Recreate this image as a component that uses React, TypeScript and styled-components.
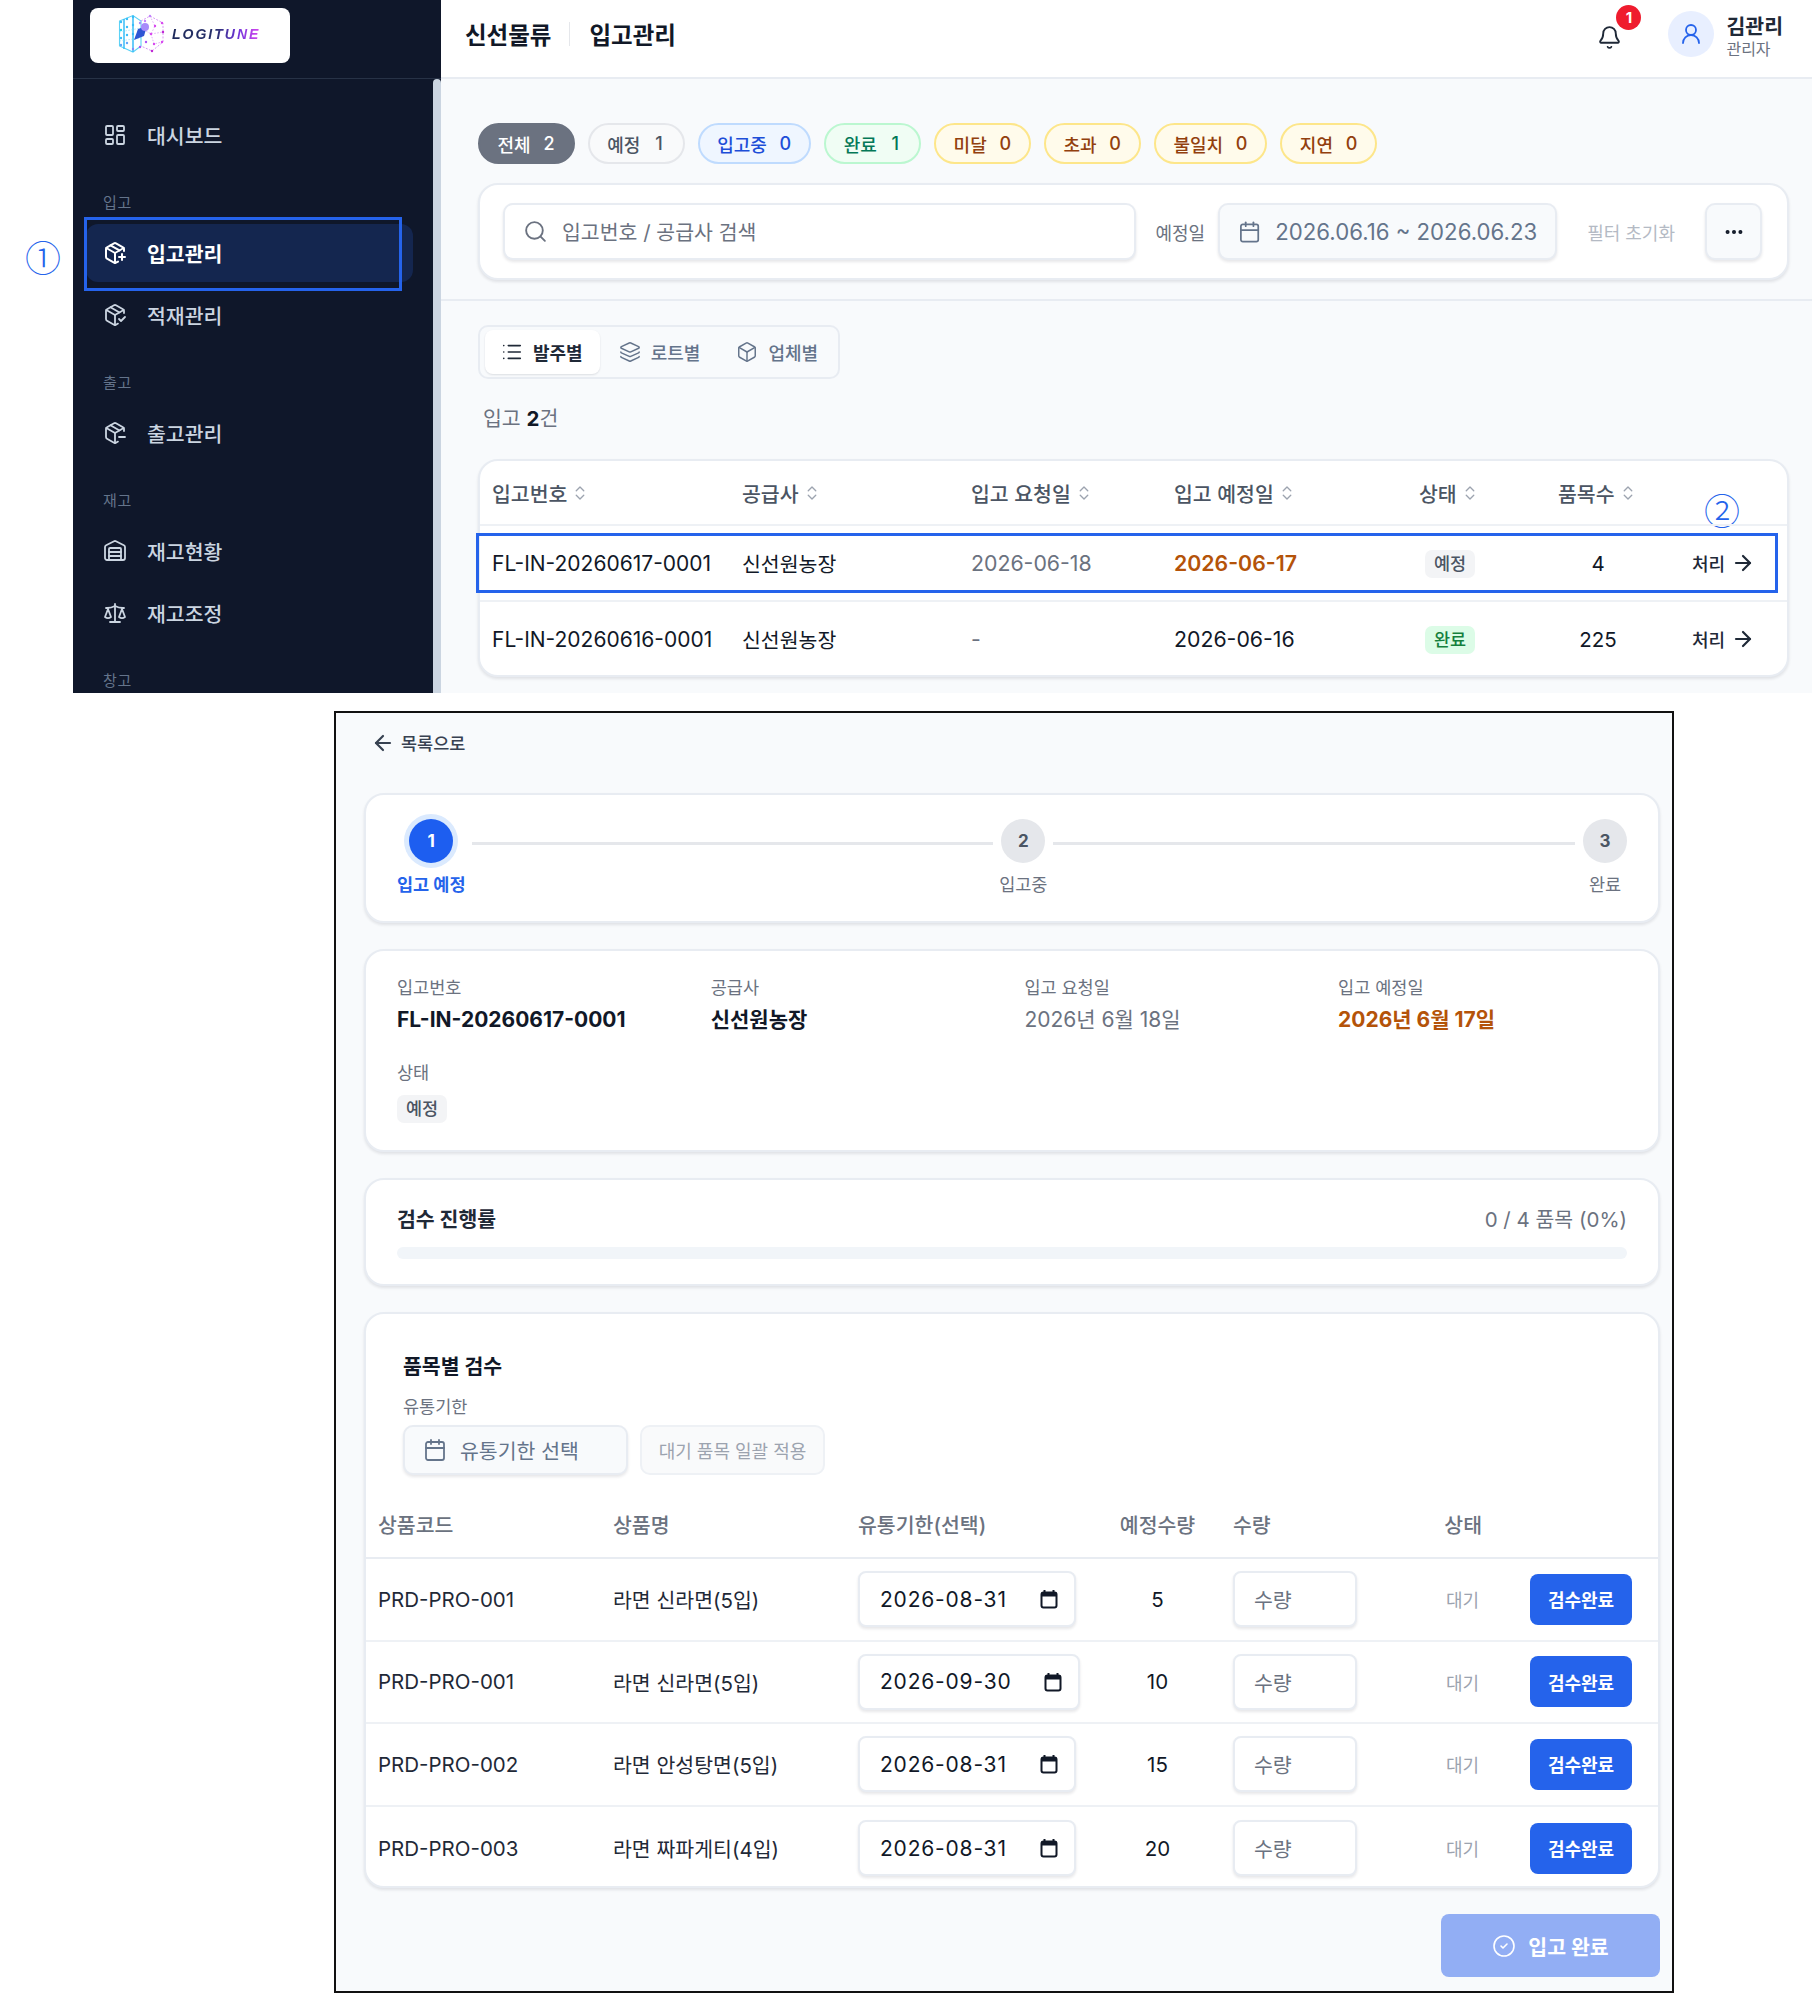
import React, { FC } from "react";
import styled, { createGlobalStyle, css } from "styled-components";
import {
  ArrowLeft,
  ArrowRight,
  Bell,
  Box,
  Calendar,
  ChevronsUpDown,
  CircleCheck,
  Ellipsis,
  Layers,
  LayoutDashboard,
  List,
  PackageCheck,
  PackageMinus,
  PackagePlus,
  Scale,
  Search,
  UserRound,
  Warehouse,
} from "lucide-react";

const GlobalStyle = createGlobalStyle`
  html, body {
    margin: 0;
    padding: 0;
    background: #ffffff;
  }
  * {
    box-sizing: border-box;
  }
  body {
    font-family: Inter, "Noto Sans CJK KR", "Noto Sans", sans-serif;
    color: #111827;
  }
`;

const Page = styled.div`
  position: relative;
  width: 1812px;
  height: 1993px;
  overflow: hidden;
`;

/* ---------- annotations on top of the screenshots ---------- */

const CircledMark = styled.span<{ $left: number; $top: number }>`
  position: absolute;
  left: ${(p) => p.$left}px;
  top: ${(p) => p.$top}px;
  width: 40px;
  height: 40px;
  color: #2563eb;
  font-family: "Noto Sans CJK KR", sans-serif;
  font-size: 36px;
  font-weight: 300;
  line-height: 40px;
  text-align: center;
`;

const HighlightBox = styled.div<{ $inset: string }>`
  position: absolute;
  inset: ${(p) => p.$inset};
  border: 3px solid #2563eb;
  pointer-events: none;
`;

/* ---------- top screenshot ---------- */

const TopShot = styled.div`
  display: flex;
  width: 1739px;
  height: 693px;
  margin-left: 73px;
  overflow: hidden;
`;

const Sidebar = styled.aside`
  position: relative;
  flex: none;
  width: 368px;
  height: 100%;
  background: #0f172a;
  overflow: hidden;
`;

const LogoBar = styled.div`
  height: 79px;
  padding: 8px 0 0 17px;
  border-bottom: 1px solid #273246;
`;

const LogoCard = styled.div`
  display: flex;
  align-items: center;
  gap: 7px;
  width: 200px;
  height: 55px;
  padding: 0 0 4px 28px;
  background: #ffffff;
  border-radius: 8px;
`;

const LogoText = styled.span`
  font-family: "Liberation Sans", sans-serif;
  font-size: 14px;
  font-style: italic;
  font-weight: 700;
  letter-spacing: 2px;
  background: linear-gradient(90deg, #1e2a5a 0%, #27306b 50%, #6b35d9 74%, #d946ef 100%);
  -webkit-background-clip: text;
  background-clip: text;
  color: transparent;
`;

const ScrollThumb = styled.div`
  position: absolute;
  top: 79px;
  right: 0;
  bottom: 0;
  width: 8px;
  background: #cbd5e1;
  border-radius: 4px 4px 0 0;
`;

const Nav = styled.nav`
  display: flex;
  flex-direction: column;
  width: 327px;
  margin-left: 13px;
  padding-top: 27px;
`;

const NavGroup = styled.div`
  display: flex;
  flex-direction: column;
  gap: 4px;
`;

const NavLabel = styled.div`
  height: 20px;
  margin: 29px 0 11px 17px;
  color: #64748b;
  font-size: 15px;
  line-height: 20px;
  letter-spacing: 0.6px;
`;

const NavItem = styled.div<{ $active?: boolean }>`
  position: relative;
  display: flex;
  align-items: center;
  gap: 20px;
  height: 58px;
  padding-left: 17px;
  border-radius: 12px;
  color: #cbd5e1;
  font-size: 20.5px;
  font-weight: 500;
  ${(p) =>
    p.$active &&
    css`
      background: #14264f;
      color: #ffffff;
      font-weight: 700;
    `}
`;

const Main = styled.main`
  flex: 1;
  min-width: 0;
  background: #f8fafc;
`;

const Header = styled.header`
  display: flex;
  align-items: center;
  height: 79px;
  padding: 0 29px 9px 24px;
  background: #ffffff;
  border-bottom: 2px solid #e8ecf2;
`;

const HeaderTitle = styled.div`
  color: #111827;
  font-size: 23.5px;
  font-weight: 700;
`;

const HeaderDivider = styled.span`
  width: 1px;
  height: 24px;
  margin: 0 19px 0 18px;
  background: #e5e7eb;
`;

const HeaderRight = styled.div`
  display: flex;
  align-items: center;
  margin-left: auto;
`;

const BellWrap = styled.div`
  position: relative;
  display: flex;
  margin: 6px 46px 0 0;
  color: #1f2937;
`;

const BellBadge = styled.span`
  position: absolute;
  top: -20px;
  right: -19px;
  width: 25px;
  height: 25px;
  border-radius: 50%;
  background: #ef1c2e;
  color: #ffffff;
  font-size: 15px;
  font-weight: 700;
  line-height: 25px;
  text-align: center;
`;

const Avatar = styled.div`
  display: flex;
  align-items: center;
  justify-content: center;
  width: 46px;
  height: 46px;
  margin-right: 12px;
  border-radius: 50%;
  background: #e8efff;
  color: #2563eb;
`;

const UserBox = styled.div`
  display: flex;
  flex-direction: column;
  margin-top: 4px;
`;

const UserName = styled.div`
  color: #1f2937;
  font-size: 20.5px;
  font-weight: 600;
  line-height: 25px;
`;

const UserRole = styled.div`
  color: #6b7280;
  font-size: 16px;
  line-height: 20px;
`;

const FilterSection = styled.section`
  padding: 44px 23px 19px 37px;
  border-bottom: 2px solid #e8ecf2;
`;

const PillRow = styled.div`
  display: flex;
  gap: 13px;
`;

const pillTones = {
  dark: "background:#6b7280;border-color:#6b7280;color:#ffffff;",
  gray: "background:#f9fafb;border-color:#e5e7eb;color:#4b5563;",
  blue: "background:#eff6ff;border-color:#bfdbfe;color:#1d4ed8;",
  green: "background:#f0fdf4;border-color:#bbf7d0;color:#047857;",
  amber: "background:#fffbeb;border-color:#fde68a;color:#92400e;",
};

const Pill = styled.div<{ $tone: keyof typeof pillTones }>`
  display: flex;
  align-items: center;
  justify-content: center;
  gap: 12px;
  height: 41px;
  padding: 0 17.4px;
  border: 2px solid;
  border-radius: 21px;
  font-size: 18px;
  font-weight: 500;
  ${(p) => pillTones[p.$tone]}
`;

const PillCount = styled.span`
  width: 13px;
  text-align: center;
`;

const Card = styled.div`
  background: #ffffff;
  border: 2px solid #e8ecf2;
  border-radius: 20px;
  box-shadow: 0 2px 3px rgba(15, 23, 42, 0.1);
`;

const FilterCard = styled(Card)`
  display: flex;
  align-items: center;
  height: 97px;
  margin-top: 19px;
  padding: 0 25px 0 23px;
`;

const SearchBox = styled.div`
  display: flex;
  flex: 1;
  align-items: center;
  gap: 14px;
  height: 57px;
  padding: 0 18px 1px;
  background: #ffffff;
  border: 2px solid #e8ecf2;
  border-radius: 10px;
  box-shadow: 0 2px 3px rgba(15, 23, 42, 0.1);
  color: #6b7280;
  font-size: 20.5px;
`;

const FilterLabel = styled.span`
  margin: 0 13px 0 19px;
  color: #6b7280;
  font-size: 18px;
`;

const DateRange = styled.div`
  display: flex;
  align-items: center;
  gap: 14px;
  width: 339px;
  height: 57px;
  padding: 0 18px;
  background: #f8fafc;
  border: 2px solid #e8ecf2;
  border-radius: 10px;
  box-shadow: 0 2px 3px rgba(15, 23, 42, 0.1);
  color: #64748b;
  font-size: 22.2px;
  white-space: nowrap;
`;

const ResetText = styled.span`
  margin: 0 30px;
  color: #b4bac4;
  font-size: 18px;
`;

const MoreButton = styled.div`
  display: flex;
  align-items: center;
  justify-content: center;
  width: 57px;
  height: 57px;
  background: #f8fafc;
  border: 2px solid #e8ecf2;
  border-radius: 10px;
  box-shadow: 0 2px 3px rgba(15, 23, 42, 0.1);
  color: #111827;
`;

const ListSection = styled.section`
  padding: 24px 23px 0 37px;
`;

const TabBar = styled.div`
  display: inline-flex;
  align-items: center;
  gap: 3px;
  height: 54px;
  padding: 0 3px 0 5px;
  background: #f8fafc;
  border: 2px solid #e8ecf2;
  border-radius: 10px;
`;

const Tab = styled.div<{ $active?: boolean }>`
  display: flex;
  align-items: center;
  gap: 10px;
  height: 44px;
  padding: 0 17px 0 16px;
  border-radius: 8px;
  color: ${(p) => (p.$active ? "#1f2937" : "#64748b")};
  font-size: 18px;
  font-weight: ${(p) => (p.$active ? 600 : 500)};
  ${(p) =>
    p.$active &&
    css`
      background: #ffffff;
      box-shadow: 0 1px 2px rgba(15, 23, 42, 0.12);
    `}
`;

const CountLine = styled.div`
  margin: 25px 0 25px 5px;
  color: #6b7280;
  font-size: 20.5px;
  line-height: 30px;

  b {
    color: #111827;
    font-weight: 700;
  }
`;

const TableCard = styled(Card)`
  height: 218px;
  overflow: visible;
`;

const OrderRow = styled.div<{ $head?: boolean }>`
  position: relative;
  display: grid;
  grid-template-columns: 250px 229px 203px 245px 139px 80px 1fr;
  align-items: center;
  height: ${(p) => (p.$head ? "63px" : "76px")};
  padding: 0 32px 0 12px;
  border-top: ${(p) => (p.$head ? "none" : "2px solid #eef1f5")};
  color: #111827;
  font-size: 20.5px;
`;

const HeadCell = styled.div`
  display: flex;
  align-items: center;
  gap: 4px;
  color: #4b5563;
  font-weight: 500;
`;

const SortIcon = styled(ChevronsUpDown)`
  color: #9ca3af;
`;

const CodeCell = styled.div`
  font-size: 21px;
`;

const DateCell = styled.div<{ $tone?: "muted" | "late" }>`
  color: ${(p) =>
    p.$tone === "muted" ? "#6b7280" : p.$tone === "late" ? "#b45309" : "#111827"};
  font-size: 21.3px;
  font-weight: ${(p) => (p.$tone === "late" ? 600 : 400)};
`;

const StatusWrap = styled.div`
  display: flex;
  justify-content: center;
  width: 62px;
  margin-top: 2px;
`;

const StatusBadge = styled.span<{ $tone: "gray" | "green" }>`
  display: inline-block;
  height: 28px;
  padding: 0 9px;
  border-radius: 7px;
  background: ${(p) => (p.$tone === "green" ? "#dcfce7" : "#f3f4f6")};
  color: ${(p) => (p.$tone === "green" ? "#15803d" : "#4b5563")};
  font-size: 17.5px;
  font-weight: 500;
  line-height: 28px;
`;

const CenterCell = styled.div`
  text-align: center;
`;

const ActionCell = styled.div`
  display: flex;
  align-items: center;
  justify-content: flex-end;
  gap: 6px;
  color: #1f2937;
  font-size: 18px;
  font-weight: 500;
`;

/* ---------- bottom screenshot ---------- */

const BottomShot = styled.div`
  display: flex;
  flex-direction: column;
  gap: 26px;
  width: 1340px;
  height: 1282px;
  margin: 18px 0 0 334px;
  padding: 0 12px 0 28px;
  background: #f8fafc;
  border: 2px solid #111111;
`;

const BackLink = styled.div`
  display: flex;
  align-items: center;
  gap: 6px;
  height: 54px;
  margin-left: 7px;
  padding-top: 5px;
  color: #374151;
  font-size: 17.5px;
  font-weight: 500;
`;

const StepCard = styled(Card)`
  display: flex;
  align-items: flex-start;
  height: 130px;
  padding: 24px 29px 0 31px;
`;

const Step = styled.div`
  display: flex;
  flex: none;
  flex-direction: column;
  align-items: center;
  gap: 10px;
  min-width: 48px;
`;

const StepCircle = styled.div<{ $active?: boolean }>`
  display: flex;
  align-items: center;
  justify-content: center;
  width: 44px;
  height: 44px;
  border-radius: 50%;
  background: ${(p) => (p.$active ? "#1d5ef0" : "#e5e7eb")};
  color: ${(p) => (p.$active ? "#ffffff" : "#4b5563")};
  font-size: 17px;
  font-weight: 700;
  ${(p) => p.$active && "box-shadow: 0 0 0 5px #dbeafe;"}
`;

const StepLabel = styled.div<{ $active?: boolean }>`
  color: ${(p) => (p.$active ? "#2563eb" : "#6b7280")};
  font-size: 17.5px;
  font-weight: ${(p) => (p.$active ? 700 : 400)};
  line-height: 24px;
`;

const StepLine = styled.div`
  flex: 1;
  height: 3px;
  margin: 23px 6px 0;
  background: #e5e7eb;
`;

const InfoCard = styled(Card)`
  display: grid;
  grid-template-columns: repeat(4, 313.7px);
  grid-template-rows: 85px 1fr;
  height: 203px;
  padding: 25px 31px 0;
`;

const InfoField = styled.div`
  display: flex;
  flex-direction: column;
  gap: 5px;
`;

const InfoLabel = styled.div`
  color: #6b7280;
  font-size: 17.5px;
  line-height: 24px;
`;

const InfoValue = styled.div<{ $tone?: "muted" | "late" }>`
  color: ${(p) =>
    p.$tone === "muted" ? "#6b7280" : p.$tone === "late" ? "#b45309" : "#111827"};
  font-size: 21px;
  font-weight: ${(p) => (p.$tone === "muted" ? 400 : 700)};
  line-height: 30px;
`;

const InfoBadgeWrap = styled.div`
  margin-top: 5px;
`;

const ProgressCard = styled(Card)`
  height: 108px;
  padding: 23px 31px 0;
`;

const ProgressTop = styled.div`
  display: flex;
  align-items: center;
  justify-content: space-between;
  height: 30px;
  font-size: 20.5px;
`;

const ProgressTitle = styled.div`
  color: #1f2937;
  font-weight: 700;
`;

const ProgressCount = styled.div`
  color: #6b7280;
`;

const ProgressTrack = styled.div`
  height: 12px;
  margin-top: 14px;
  border-radius: 6px;
  background: #f1f5f9;
`;

const ItemsCard = styled(Card)`
  height: 576px;
  overflow: hidden;
`;

const ItemsTop = styled.div`
  height: 182px;
  padding: 38px 0 0 37px;
`;

const ItemsTitle = styled.div`
  color: #111827;
  font-size: 20.5px;
  font-weight: 700;
  line-height: 30px;
`;

const ItemsLabel = styled.div`
  margin-top: 13px;
  color: #6b7280;
  font-size: 17.5px;
  line-height: 24px;
`;

const ItemsActions = styled.div`
  display: flex;
  gap: 12px;
  margin-top: 6px;
`;

const ExpiryPicker = styled.div`
  display: flex;
  align-items: center;
  gap: 13px;
  width: 225px;
  height: 50px;
  padding: 0 18px;
  background: #f8fafc;
  border: 2px solid #e8ecf2;
  border-radius: 10px;
  box-shadow: 0 2px 3px rgba(15, 23, 42, 0.1);
  color: #64748b;
  font-size: 20.5px;
`;

const ApplyButton = styled.div`
  display: flex;
  align-items: center;
  justify-content: center;
  width: 185px;
  height: 50px;
  background: #f9fafb;
  border: 2px solid #eef1f5;
  border-radius: 10px;
  color: #9ca3af;
  font-size: 18px;
`;

const itemColumns = "235px 245px 252px 123px 170px 1fr";

const ItemsHead = styled.div`
  display: grid;
  grid-template-columns: ${itemColumns};
  align-items: center;
  height: 63px;
  padding: 0 26px 6px 12px;
  border-bottom: 2px solid #e8ecf2;
  color: #6b7280;
  font-size: 20.5px;
  font-weight: 500;
`;

const ItemRow = styled.div`
  display: grid;
  grid-template-columns: ${itemColumns};
  align-items: center;
  height: 82.6px;
  padding: 0 26px 0 12px;
  border-bottom: 2px solid #eef1f5;
  color: #1f2937;
  font-size: 20.5px;

  &:last-child {
    border-bottom: none;
  }
`;

const DateInput = styled.div<{ $wide?: boolean }>`
  display: flex;
  align-items: center;
  justify-content: space-between;
  width: ${(p) => (p.$wide ? "222px" : "218px")};
  height: 56px;
  padding: 0 16px 0 20px;
  background: #ffffff;
  border: 2px solid #e8ecf2;
  border-radius: 8px;
  box-shadow: 0 2px 3px rgba(15, 23, 42, 0.1);
  color: #111827;
  font-size: 21px;
  letter-spacing: 0.8px;
`;

const PlanCell = styled.div`
  padding-right: 28px;
  text-align: center;
`;

const PlanQty = styled(PlanCell)`
  color: #111827;
`;

const QtyInput = styled.div`
  display: flex;
  align-items: center;
  width: 124px;
  height: 56px;
  padding-left: 19px;
  background: #ffffff;
  border: 2px solid #e8ecf2;
  border-radius: 8px;
  box-shadow: 0 2px 3px rgba(15, 23, 42, 0.1);
  color: #6b7280;
`;

const RightGroup = styled.div`
  display: flex;
  align-items: center;
  justify-content: flex-end;
  gap: 51px;
`;

const WaitText = styled.span`
  color: #9ca3af;
  font-size: 18px;
  white-space: nowrap;
`;

const InspectButton = styled.div`
  display: flex;
  align-items: center;
  justify-content: center;
  width: 102px;
  height: 51px;
  border-radius: 8px;
  background: #2563eb;
  color: #ffffff;
  font-size: 18px;
  font-weight: 600;
  white-space: nowrap;
`;

const HeadStatus = styled.div`
  display: flex;
  justify-content: flex-end;
  padding-right: 150px;
  white-space: nowrap;
`;

const FooterRow = styled.div`
  display: flex;
  justify-content: flex-end;
`;

const CompleteButton = styled.div`
  display: flex;
  align-items: center;
  justify-content: center;
  gap: 12px;
  width: 219px;
  height: 63px;
  border-radius: 8px;
  background: #92aef4;
  color: #ffffff;
  font-size: 20.5px;
  font-weight: 700;
`;

const CalendarGlyph: FC = () => (
  <svg width="18" height="20" viewBox="0 0 18 20" fill="none" aria-hidden="true">
    <path d="M4.5 1v3M13.5 1v3" stroke="#111827" strokeWidth="2" />
    <rect x="1.5" y="3.5" width="15" height="15" rx="2" stroke="#111827" strokeWidth="2" />
    <rect x="1.5" y="3.5" width="15" height="4" fill="#111827" />
  </svg>
);

const logoDots: [number, number, string][] = [
  [3, 8, "#38bdf8"], [9, 5, "#38bdf8"], [15, 3, "#38bdf8"], [3, 16, "#22d3ee"],
  [9, 13, "#38bdf8"], [15, 11, "#38bdf8"], [3, 24, "#38bdf8"], [9, 21, "#38bdf8"],
  [15, 20, "#38bdf8"], [3, 31, "#60a5fa"], [9, 29, "#60a5fa"], [15, 35, "#818cf8"],
  [22, 9, "#a78bfa"], [32, 2, "#c084fc"], [44, 9, "#d946ef"], [37, 12, "#d946ef"],
  [45, 18, "#c026d3"], [33, 20, "#d946ef"], [44, 28, "#d946ef"], [36, 30, "#d946ef"],
  [28, 28, "#a855f7"], [34, 37, "#c026d3"], [22, 33, "#a855f7"], [27, 7, "#c084fc"],
];

const LogoMark: FC = () => (
  <svg width="47" height="40" viewBox="0 0 47 40" fill="none" aria-hidden="true">
    <path d="M1.5 7 L15 1.5 L23 7 V32 L15 38 L1.5 32 Z" stroke="#5cd2f6" strokeWidth="1.1" />
    <path d="M15 1.5 V38 M6 5 V35" stroke="#38bdf8" strokeWidth="1.5" />
    <path d="M1.5 18 L23 14 M1.5 27 L23 24" stroke="#7fdcf7" strokeWidth="0.6" strokeDasharray="1.5 1.5" />
    <path d="M23 7 L32 2 L45 9 V28 L34 37 L23 32" stroke="#d58cf5" strokeWidth="0.9" strokeDasharray="2 1.5" />
    <path d="M23 14 L33 20 L45 18 M33 20 L36 30 L44 28 M32 2 L37 12 L33 20" stroke="#d58cf5" strokeWidth="0.7" strokeDasharray="1.5 1.5" />
    <path d="M16 26 L20 15 L29 12 L26 22 Z" fill="#2f55d4" />
    <circle cx="27" cy="13" r="4" fill="#a78bfa" />
    {logoDots.map(([x, y, color], index) => (
      <circle key={index} cx={x} cy={y} r="1.2" fill={color} />
    ))}
  </svg>
);

const pills = [
  { label: "전체", count: 2, tone: "dark" },
  { label: "예정", count: 1, tone: "gray" },
  { label: "입고중", count: 0, tone: "blue" },
  { label: "완료", count: 1, tone: "green" },
  { label: "미달", count: 0, tone: "amber" },
  { label: "초과", count: 0, tone: "amber" },
  { label: "불일치", count: 0, tone: "amber" },
  { label: "지연", count: 0, tone: "amber" },
] as const;

const orderHead = ["입고번호", "공급사", "입고 요청일", "입고 예정일", "상태", "품목수"];

const items = [
  { code: "PRD-PRO-001", name: "라면 신라면(5입)", date: "2026-08-31", qty: 5 },
  { code: "PRD-PRO-001", name: "라면 신라면(5입)", date: "2026-09-30", qty: 10, wide: true },
  { code: "PRD-PRO-002", name: "라면 안성탕면(5입)", date: "2026-08-31", qty: 15 },
  { code: "PRD-PRO-003", name: "라면 짜파게티(4입)", date: "2026-08-31", qty: 20 },
];

const App: FC = () => {
  return (
    <Page>
      <GlobalStyle />
      <CircledMark $left={23} $top={236}>①</CircledMark>
      <CircledMark $left={1702} $top={489}>②</CircledMark>

      <TopShot>
        <Sidebar>
          <LogoBar>
            <LogoCard>
              <LogoMark />
              <LogoText>LOGITUNE</LogoText>
            </LogoCard>
          </LogoBar>
          <Nav>
            <NavItem>
              <LayoutDashboard size={24} strokeWidth={1.8} />
              대시보드
            </NavItem>
            <NavLabel>입고</NavLabel>
            <NavGroup>
              <NavItem $active>
                <PackagePlus size={24} strokeWidth={2} />
                입고관리
                <HighlightBox $inset="-7px 11px -9px -2px" />
              </NavItem>
              <NavItem>
                <PackageCheck size={24} strokeWidth={1.8} />
                적재관리
              </NavItem>
            </NavGroup>
            <NavLabel>출고</NavLabel>
            <NavItem>
              <PackageMinus size={24} strokeWidth={1.8} />
              출고관리
            </NavItem>
            <NavLabel>재고</NavLabel>
            <NavGroup>
              <NavItem>
                <Warehouse size={24} strokeWidth={1.8} />
                재고현황
              </NavItem>
              <NavItem>
                <Scale size={24} strokeWidth={1.8} />
                재고조정
              </NavItem>
            </NavGroup>
            <NavLabel>창고</NavLabel>
          </Nav>
          <ScrollThumb />
        </Sidebar>

        <Main>
          <Header>
            <HeaderTitle>신선물류</HeaderTitle>
            <HeaderDivider />
            <HeaderTitle>입고관리</HeaderTitle>
            <HeaderRight>
              <BellWrap>
                <Bell size={25} strokeWidth={1.8} />
                <BellBadge>1</BellBadge>
              </BellWrap>
              <Avatar>
                <UserRound size={24} strokeWidth={1.8} />
              </Avatar>
              <UserBox>
                <UserName>김관리</UserName>
                <UserRole>관리자</UserRole>
              </UserBox>
            </HeaderRight>
          </Header>

          <FilterSection>
            <PillRow>
              {pills.map((pill) => (
                <Pill key={pill.label} $tone={pill.tone}>
                  <span>{pill.label}</span>
                  <PillCount>{pill.count}</PillCount>
                </Pill>
              ))}
            </PillRow>
            <FilterCard>
              <SearchBox>
                <Search size={25} strokeWidth={1.8} />
                입고번호 / 공급사 검색
              </SearchBox>
              <FilterLabel>예정일</FilterLabel>
              <DateRange>
                <Calendar size={24} strokeWidth={1.8} />
                2026.06.16 ~ 2026.06.23
              </DateRange>
              <ResetText>필터 초기화</ResetText>
              <MoreButton>
                <Ellipsis size={22} strokeWidth={2.4} />
              </MoreButton>
            </FilterCard>
          </FilterSection>

          <ListSection>
            <TabBar>
              <Tab $active>
                <List size={22} strokeWidth={1.8} />
                발주별
              </Tab>
              <Tab>
                <Layers size={22} strokeWidth={1.6} />
                로트별
              </Tab>
              <Tab>
                <Box size={22} strokeWidth={1.6} />
                업체별
              </Tab>
            </TabBar>
            <CountLine>
              입고 <b>2</b>건
            </CountLine>
            <TableCard>
              <OrderRow $head>
                {orderHead.map((title) => (
                  <HeadCell key={title}>
                    {title}
                    <SortIcon size={18} strokeWidth={1.8} />
                  </HeadCell>
                ))}
              </OrderRow>
              <OrderRow>
                <CodeCell>FL-IN-20260617-0001</CodeCell>
                <div>신선원농장</div>
                <DateCell $tone="muted">2026-06-18</DateCell>
                <DateCell $tone="late">2026-06-17</DateCell>
                <StatusWrap>
                  <StatusBadge $tone="gray">예정</StatusBadge>
                </StatusWrap>
                <CenterCell>4</CenterCell>
                <ActionCell>
                  처리
                  <ArrowRight size={24} strokeWidth={2.2} />
                </ActionCell>
                <HighlightBox $inset="7px 9px 7px -4px" />
              </OrderRow>
              <OrderRow>
                <CodeCell>FL-IN-20260616-0001</CodeCell>
                <div>신선원농장</div>
                <DateCell $tone="muted">-</DateCell>
                <DateCell>2026-06-16</DateCell>
                <StatusWrap>
                  <StatusBadge $tone="green">완료</StatusBadge>
                </StatusWrap>
                <CenterCell>225</CenterCell>
                <ActionCell>
                  처리
                  <ArrowRight size={24} strokeWidth={2.2} />
                </ActionCell>
              </OrderRow>
            </TableCard>
          </ListSection>
        </Main>
      </TopShot>

      <BottomShot>
        <BackLink>
          <ArrowLeft size={24} strokeWidth={2.2} />
          목록으로
        </BackLink>

        <StepCard>
          <Step>
            <StepCircle $active>1</StepCircle>
            <StepLabel $active>입고 예정</StepLabel>
          </Step>
          <StepLine />
          <Step>
            <StepCircle>2</StepCircle>
            <StepLabel>입고중</StepLabel>
          </Step>
          <StepLine />
          <Step>
            <StepCircle>3</StepCircle>
            <StepLabel>완료</StepLabel>
          </Step>
        </StepCard>

        <InfoCard>
          <InfoField>
            <InfoLabel>입고번호</InfoLabel>
            <InfoValue>FL-IN-20260617-0001</InfoValue>
          </InfoField>
          <InfoField>
            <InfoLabel>공급사</InfoLabel>
            <InfoValue>신선원농장</InfoValue>
          </InfoField>
          <InfoField>
            <InfoLabel>입고 요청일</InfoLabel>
            <InfoValue $tone="muted">2026년 6월 18일</InfoValue>
          </InfoField>
          <InfoField>
            <InfoLabel>입고 예정일</InfoLabel>
            <InfoValue $tone="late">2026년 6월 17일</InfoValue>
          </InfoField>
          <InfoField>
            <InfoLabel>상태</InfoLabel>
            <InfoBadgeWrap>
              <StatusBadge $tone="gray">예정</StatusBadge>
            </InfoBadgeWrap>
          </InfoField>
        </InfoCard>

        <ProgressCard>
          <ProgressTop>
            <ProgressTitle>검수 진행률</ProgressTitle>
            <ProgressCount>0 / 4 품목 (0%)</ProgressCount>
          </ProgressTop>
          <ProgressTrack />
        </ProgressCard>

        <ItemsCard>
          <ItemsTop>
            <ItemsTitle>품목별 검수</ItemsTitle>
            <ItemsLabel>유통기한</ItemsLabel>
            <ItemsActions>
              <ExpiryPicker>
                <Calendar size={24} strokeWidth={1.8} />
                유통기한 선택
              </ExpiryPicker>
              <ApplyButton>대기 품목 일괄 적용</ApplyButton>
            </ItemsActions>
          </ItemsTop>
          <ItemsHead>
            <div>상품코드</div>
            <div>상품명</div>
            <div>유통기한(선택)</div>
            <PlanCell>예정수량</PlanCell>
            <div>수량</div>
            <HeadStatus>상태</HeadStatus>
          </ItemsHead>
          {items.map((item, index) => (
            <ItemRow key={index}>
              <div>{item.code}</div>
              <div>{item.name}</div>
              <div>
                <DateInput $wide={item.wide}>
                  {item.date}
                  <CalendarGlyph />
                </DateInput>
              </div>
              <PlanQty>{item.qty}</PlanQty>
              <div>
                <QtyInput>수량</QtyInput>
              </div>
              <RightGroup>
                <WaitText>대기</WaitText>
                <InspectButton>검수완료</InspectButton>
              </RightGroup>
            </ItemRow>
          ))}
        </ItemsCard>

        <FooterRow>
          <CompleteButton>
            <CircleCheck size={24} strokeWidth={1.6} />
            입고 완료
          </CompleteButton>
        </FooterRow>
      </BottomShot>
    </Page>
  );
};

export default App;
